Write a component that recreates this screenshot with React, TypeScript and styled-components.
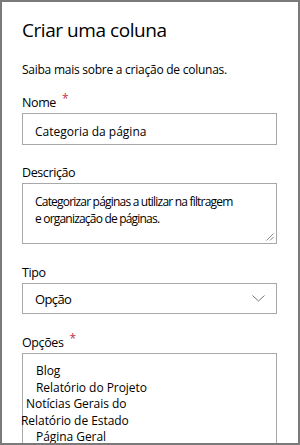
import React from "react";
import styled, { createGlobalStyle } from "styled-components";

const Global = createGlobalStyle`
  html, body { margin: 0; padding: 0; background: #fff; }
  * { box-sizing: border-box; }
`;

const Panel = styled.div`
  width: 300px;
  height: 445px;
  border: 2px solid #7a7a7a;
  overflow: hidden;
  padding: 14px 21px 0 20px;
  font-family: "Open Sans", "Noto Sans", sans-serif;
  color: #000;
  display: flex;
  flex-direction: column;
`;

const Title = styled.h1`
  margin: 0;
  font-size: 19px;
  font-weight: 400;
  line-height: 28px;
  color: #000;
  letter-spacing: -0.45px;
`;

const Intro = styled.p`
  margin: 17px 0 0;
  font-size: 12px;
  line-height: 18px;
  letter-spacing: -0.25px;
`;

const Field = styled.div<{ $top: number }>`
  margin-top: ${(p) => p.$top}px;
  display: flex;
  flex-direction: column;
`;

const Label = styled.label`
  font-size: 12.5px;
  line-height: 18px;
  height: 20px;
  padding-top: 2px;
  display: flex;
  align-items: flex-start;
  gap: 6px;
  margin-bottom: 1px;
  letter-spacing: -0.4px;
`;

const Star = styled.span`
  color: #c4314b;
  font-size: 12px;
  line-height: 10px;
`;

const TextBox = styled.div`
  height: 32px;
  border: 1px solid #a8a8a8;
  padding: 9px 12px 0;
  font-size: 12px;
  line-height: 17px;
`;

const Select = styled.div`
  height: 31px;
  border: 1px solid #a8a8a8;
  padding: 0 11px 0 12px;
  font-size: 13px;
  letter-spacing: -0.6px;
  display: flex;
  align-items: center;
  justify-content: space-between;
`;

const Area = styled.div`
  position: relative;
  height: 61px;
  border: 1px solid #a8a8a8;
  padding: 9px 12px 0;
  font-size: 12px;
  line-height: 17px;
  letter-spacing: -0.8px;
  white-space: nowrap;
`;

const Grip = styled.svg`
  position: absolute;
  right: 2px;
  bottom: 2px;
`;

const List = styled.div`
  border: 1px solid #a8a8a8;
  border-bottom: none;
  height: 100px;
  padding-top: 9px;
  font-size: 12px;
  line-height: 16.5px;
  letter-spacing: -0.05px;
  display: flex;
  flex-direction: column;
`;

const Item = styled.div<{ $indent: number }>`
  margin-left: ${(p) => p.$indent}px;
  white-space: nowrap;
`;

export default function App() {
  return (
    <>
      <Global />
      <Panel>
        <Title>Criar uma coluna</Title>
        <Intro>Saiba mais sobre a criação de colunas.</Intro>
        <Field $top={13}>
          <Label>
            Nome <Star>*</Star>
          </Label>
          <TextBox>Categoria da página</TextBox>
        </Field>
        <Field $top={17}>
          <Label>Descrição</Label>
          <Area>
            Categorizar páginas a utilizar na filtragem
            <br />e organização de páginas.
            <Grip width="9" height="9" viewBox="0 0 9 9">
              <path d="M8.5 1.5 L1.5 8.5 M8.5 5 L5 8.5" stroke="#8a8a8a" strokeWidth="1" fill="none" />
            </Grip>
          </Area>
        </Field>
        <Field $top={18}>
          <Label>Tipo</Label>
          <Select>
            Opção
            <svg width="13" height="7" viewBox="0 0 13 7">
              <path d="M0.5 0.5 L6.5 6 L12.5 0.5" stroke="#777" strokeWidth="1" fill="none" />
            </svg>
          </Select>
        </Field>
        <Field $top={18}>
          <Label>
            Opções <Star>*</Star>
          </Label>
          <List>
            <Item $indent={13}>Blog</Item>
            <Item $indent={13}>Relatório do Projeto</Item>
            <Item $indent={3}>Notícias Gerais do</Item>
            <Item $indent={-2}>Relatório de Estado</Item>
            <Item $indent={13}>Página Geral</Item>
          </List>
        </Field>
      </Panel>
    </>
  );
}
